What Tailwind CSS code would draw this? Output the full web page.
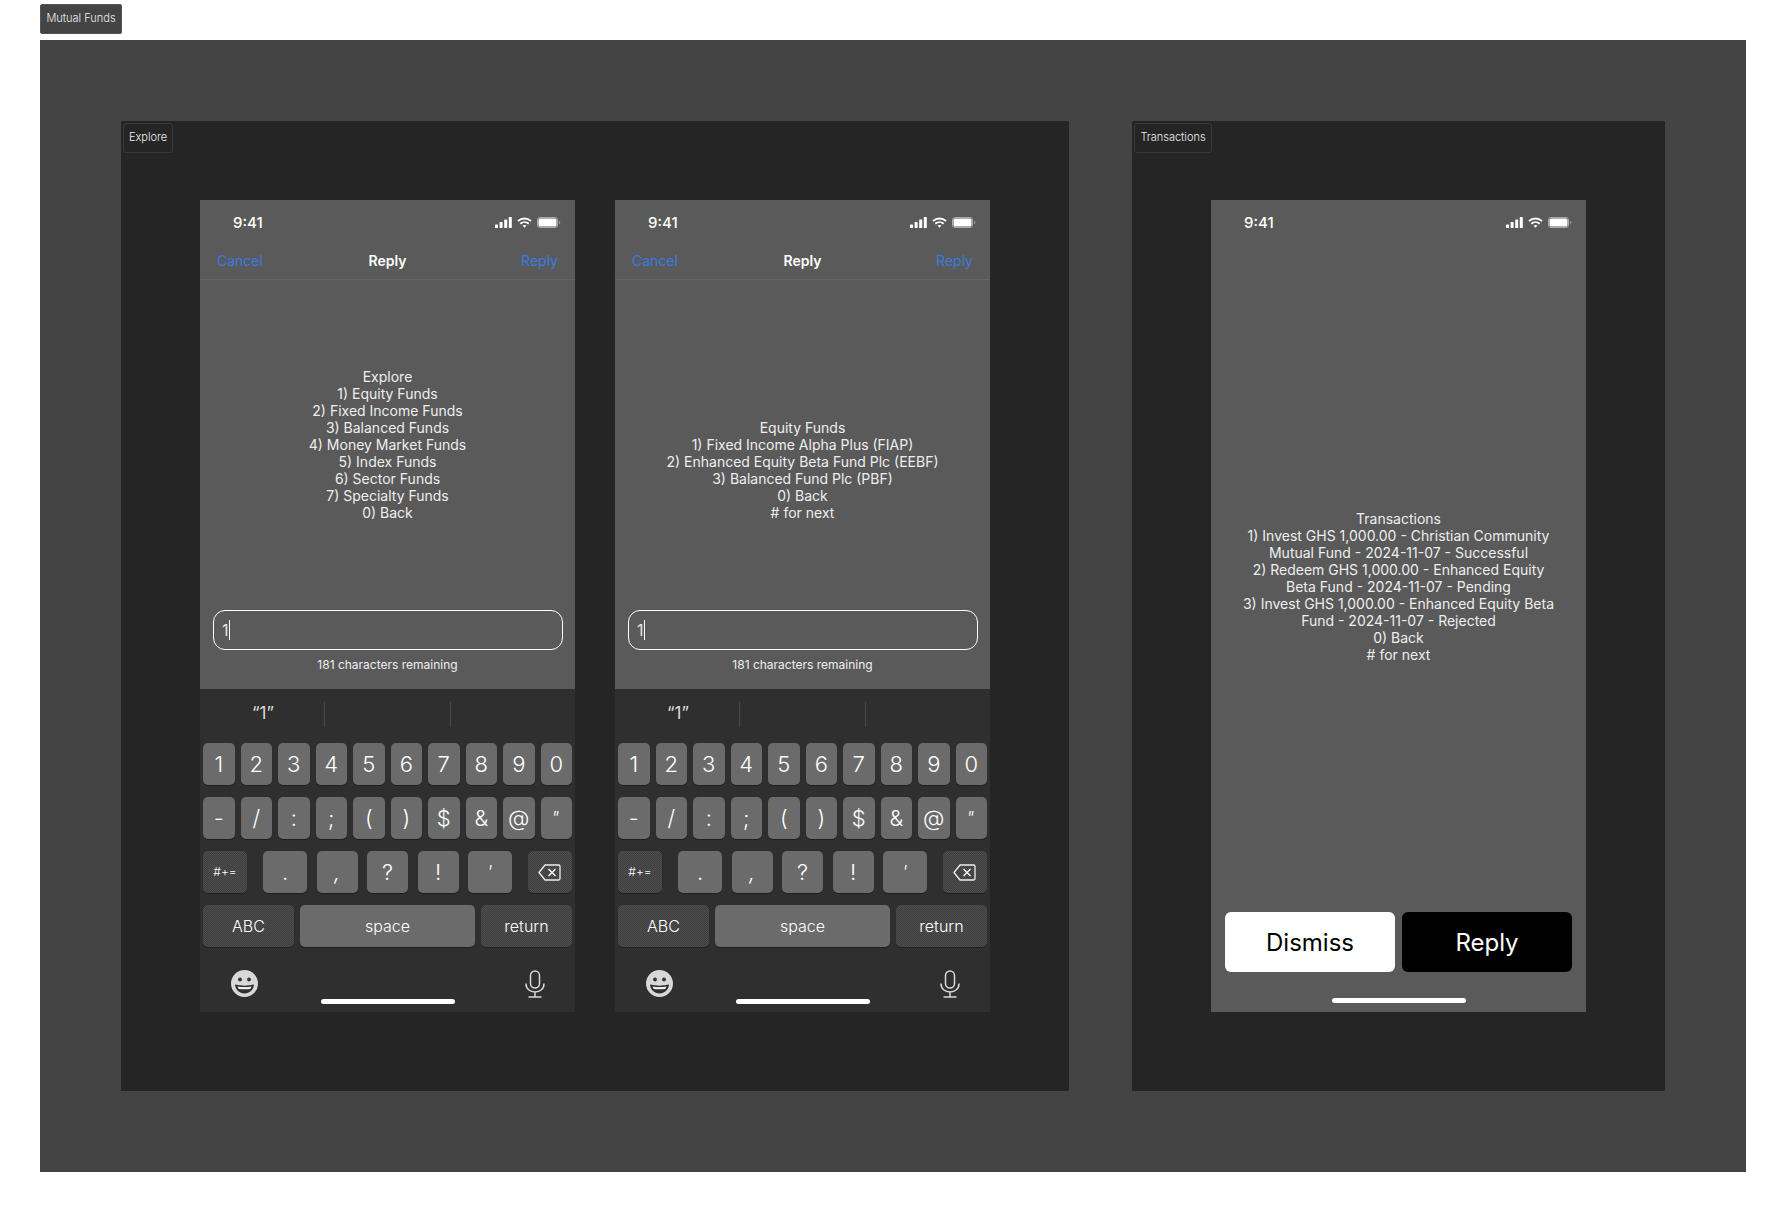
<!DOCTYPE html>
<html lang="en">
<head>
  <meta charset="UTF-8">
  <title>Mutual Funds</title>
  <script src="https://cdn.jsdelivr.net/npm/@tailwindcss/browser@4"></script>
</head>
<body class="bg-white font-['Inter',sans-serif] text-white">
  <div class="w-[1786px] h-[1212px] overflow-hidden pl-[40px] pt-[4px]">
    <!-- Section tag -->
    <div class="w-[82px] h-[30px] pb-[1px] flex items-center justify-center bg-[#444] border border-[#555] rounded-[2px] text-[11px] font-light text-[#eee]">Mutual Funds</div>

    <!-- Section canvas -->
    <div class="mt-[6px] w-[1706px] h-[1132px] bg-[#444] p-[81px] flex items-start gap-[63px]">

      <!-- Explore frame -->
      <div class="relative w-[948px] h-[970px] bg-[#252525] p-[79px] flex gap-[40px]">
        <div class="absolute left-[2px] top-[2px] w-[50px] h-[30px] pb-[1px] flex items-center justify-center border border-[#3a3a3a] rounded-[3px] text-[11px] font-light text-[#eee]">Explore</div>

        <!-- Phone 1 -->
        <div class="w-[375px] h-[812px] bg-[#5a5a5a] flex flex-col">
          <div class="h-[44px] flex items-center justify-between pl-[33px] pr-[14px]">
            <span class="text-[15px] font-medium leading-none">9:41</span>
            <div class="flex items-center gap-[5px]">
              <svg width="17" height="11" viewBox="0 0 17 11" fill="#fff"><rect x="0" y="7.500" width="3" height="3.500" rx=".6"/><rect x="4.600" y="5" width="3" height="6" rx=".6"/><rect x="9.200" y="2.500" width="3" height="8.500" rx=".6"/><rect x="13.800" y="0" width="3" height="11" rx=".6"/></svg>
              <svg width="15" height="11" viewBox="0 0 16 11" fill="none" stroke="#fff" stroke-width="2"><path d="M1 4c4-3.700 10-3.700 14 0"/><path d="M3.500 6.800c2.600-2.300 6.400-2.300 9 0"/><path d="M8 11 5.900 8.800c1.200-1 3-1 4.200 0z" fill="#fff" stroke="none"/></svg>
              <svg width="24" height="11" viewBox="0 0 24 11"><rect x=".5" y=".5" width="20" height="10" rx="2.500" fill="none" stroke="#aaa"/><rect x="1.500" y="1.500" width="18" height="8" rx="1.500" fill="#fff"/><path d="M22 3.700c.8.300 1.300 1 1.300 1.800s-.5 1.500-1.300 1.800z" fill="#999"/></svg>
            </div>
          </div>
          <div class="h-[36px] pb-[2px] grid grid-cols-3 items-center px-[17px] border-b border-[#666] text-[14px]">
            <span class="text-[#3a7be0]">Cancel</span>
            <span class="font-semibold text-center">Reply</span>
            <span class="text-[#3a7be0] text-right">Reply</span>
          </div>
          <div class="flex-1 flex flex-col justify-end">
            <div class="text-center text-[14px] leading-[17px] text-[#eee] pb-[89px]">
              <p>Explore</p>
              <p>1) Equity Funds</p>
              <p>2) Fixed Income Funds</p>
              <p>3) Balanced Funds</p>
              <p>4) Money Market Funds</p>
              <p>5) Index Funds</p>
              <p>6) Sector Funds</p>
              <p>7) Specialty Funds</p>
              <p>0) Back</p>
            </div>
            <div class="ml-[13px] mr-[12px] h-[40px] border border-white rounded-[12px] flex items-center pl-[8px] text-[16px] text-[#e5e5e5]">1<span class="w-px h-[20px] bg-white"></span></div>
            <p class="mt-[7px] mb-[17px] text-center text-[12px] leading-[15px] text-[#eee]">181 characters remaining</p>
          </div>
          <div class="h-[323px] bg-[#2f2f2f] shrink-0">
            <div class="h-[54px] pt-[13px] flex">
              <div class="w-[125px] h-[25px] pb-[2px] pl-[2px] flex items-center justify-center border-r border-[#484848] text-[17px] text-[#ddd]">“1”</div>
              <div class="w-[126px] h-[25px] border-r border-[#484848]"></div>
            </div>
            <div class="px-[3px] flex flex-col gap-[12px]">
              <div class="grid grid-cols-10 gap-x-[6px] text-[22px] font-light">
                <div class="h-[42px] bg-[#6b6b6b] rounded-[5px] shadow-[0_1px_0_#1f1f1f] flex items-center justify-center">1</div>
                <div class="h-[42px] bg-[#6b6b6b] rounded-[5px] shadow-[0_1px_0_#1f1f1f] flex items-center justify-center">2</div>
                <div class="h-[42px] bg-[#6b6b6b] rounded-[5px] shadow-[0_1px_0_#1f1f1f] flex items-center justify-center">3</div>
                <div class="h-[42px] bg-[#6b6b6b] rounded-[5px] shadow-[0_1px_0_#1f1f1f] flex items-center justify-center">4</div>
                <div class="h-[42px] bg-[#6b6b6b] rounded-[5px] shadow-[0_1px_0_#1f1f1f] flex items-center justify-center">5</div>
                <div class="h-[42px] bg-[#6b6b6b] rounded-[5px] shadow-[0_1px_0_#1f1f1f] flex items-center justify-center">6</div>
                <div class="h-[42px] bg-[#6b6b6b] rounded-[5px] shadow-[0_1px_0_#1f1f1f] flex items-center justify-center">7</div>
                <div class="h-[42px] bg-[#6b6b6b] rounded-[5px] shadow-[0_1px_0_#1f1f1f] flex items-center justify-center">8</div>
                <div class="h-[42px] bg-[#6b6b6b] rounded-[5px] shadow-[0_1px_0_#1f1f1f] flex items-center justify-center">9</div>
                <div class="h-[42px] bg-[#6b6b6b] rounded-[5px] shadow-[0_1px_0_#1f1f1f] flex items-center justify-center">0</div>
              </div>
              <div class="grid grid-cols-10 gap-x-[6px] text-[22px] font-light">
                <div class="h-[42px] bg-[#6b6b6b] rounded-[5px] shadow-[0_1px_0_#1f1f1f] flex items-center justify-center">-</div>
                <div class="h-[42px] bg-[#6b6b6b] rounded-[5px] shadow-[0_1px_0_#1f1f1f] flex items-center justify-center">/</div>
                <div class="h-[42px] bg-[#6b6b6b] rounded-[5px] shadow-[0_1px_0_#1f1f1f] flex items-center justify-center">:</div>
                <div class="h-[42px] bg-[#6b6b6b] rounded-[5px] shadow-[0_1px_0_#1f1f1f] flex items-center justify-center">;</div>
                <div class="h-[42px] bg-[#6b6b6b] rounded-[5px] shadow-[0_1px_0_#1f1f1f] flex items-center justify-center">(</div>
                <div class="h-[42px] bg-[#6b6b6b] rounded-[5px] shadow-[0_1px_0_#1f1f1f] flex items-center justify-center">)</div>
                <div class="h-[42px] bg-[#6b6b6b] rounded-[5px] shadow-[0_1px_0_#1f1f1f] flex items-center justify-center">$</div>
                <div class="h-[42px] bg-[#6b6b6b] rounded-[5px] shadow-[0_1px_0_#1f1f1f] flex items-center justify-center">&amp;</div>
                <div class="h-[42px] bg-[#6b6b6b] rounded-[5px] shadow-[0_1px_0_#1f1f1f] flex items-center justify-center">@</div>
                <div class="h-[42px] pr-[2px] bg-[#6b6b6b] rounded-[5px] shadow-[0_1px_0_#1f1f1f] flex items-center justify-center italic text-[18px]">"</div>
              </div>
              <div class="flex justify-between">
                <div class="w-[44px] h-[42px] bg-[repeating-conic-gradient(#3d3d3d_0_25%,#4f4f4f_0_50%)] bg-[length:2px_2px] rounded-[5px] shadow-[0_1px_0_#1f1f1f] flex items-center justify-center text-[12px] font-light">#+=</div>
                <div class="w-[249px] flex justify-between text-[22px] font-light">
                  <div class="w-[44px] h-[42px] bg-[#6b6b6b] rounded-[5px] shadow-[0_1px_0_#1f1f1f] flex items-center justify-center">.</div>
                  <div class="w-[41px] h-[42px] bg-[#6b6b6b] rounded-[5px] shadow-[0_1px_0_#1f1f1f] flex items-center justify-center italic">,</div>
                  <div class="w-[41px] h-[42px] bg-[#6b6b6b] rounded-[5px] shadow-[0_1px_0_#1f1f1f] flex items-center justify-center">?</div>
                  <div class="w-[41px] h-[42px] bg-[#6b6b6b] rounded-[5px] shadow-[0_1px_0_#1f1f1f] flex items-center justify-center">!</div>
                  <div class="w-[44px] h-[42px] pr-[1px] bg-[#6b6b6b] rounded-[5px] shadow-[0_1px_0_#1f1f1f] flex items-center justify-center italic text-[18px]">'</div>
                </div>
                <div class="w-[44px] h-[42px] pr-[2px] bg-[repeating-conic-gradient(#3d3d3d_0_25%,#4f4f4f_0_50%)] bg-[length:2px_2px] rounded-[5px] shadow-[0_1px_0_#1f1f1f] flex items-center justify-center">
                  <svg width="23" height="17" viewBox="0 0 23 17" fill="none" stroke="#f0f0f0" stroke-width="1.300"><path d="M7 1h13.500A1.500 1.500 0 0 1 22 2.500v12a1.500 1.500 0 0 1-1.500 1.500H7L1 8.500z" stroke-linejoin="round"/><path d="m10.500 5 7 7M17.500 5l-7 7" stroke-width="1.500"/></svg>
                </div>
              </div>
              <div class="flex gap-[6px] text-[16px] font-light">
                <div class="w-[91px] h-[42px] bg-[repeating-conic-gradient(#3d3d3d_0_25%,#4f4f4f_0_50%)] bg-[length:2px_2px] rounded-[5px] shadow-[0_1px_0_#1f1f1f] flex items-center justify-center">ABC</div>
                <div class="flex-1 h-[42px] bg-[#6b6b6b] rounded-[5px] shadow-[0_1px_0_#1f1f1f] flex items-center justify-center">space</div>
                <div class="w-[91px] h-[42px] bg-[repeating-conic-gradient(#3d3d3d_0_25%,#4f4f4f_0_50%)] bg-[length:2px_2px] rounded-[5px] shadow-[0_1px_0_#1f1f1f] flex items-center justify-center">return</div>
              </div>
            </div>
            <div class="mt-[23px] px-[3px] grid grid-cols-[1fr_134px_1fr]">
              <div class="pl-[28px]">
                <svg width="27" height="27" viewBox="0 0 27 27"><circle cx="13.500" cy="13.500" r="13.500" fill="#d8d8d8"/><circle cx="9" cy="9.500" r="1.900" fill="#333"/><circle cx="18" cy="9.500" r="1.900" fill="#333"/><path d="M4 14.500c6 1.500 13 1.500 19 0-.5 5.500-4.500 9-9.500 9S4.500 20 4 14.500z" fill="#2f2f2f"/><path d="M6.500 16.500c4.500.8 9.500.8 14 0-.3 1-.7 1.800-1.200 2.400-3.600.5-8 .5-11.600 0-.5-.6-.9-1.400-1.200-2.400z" fill="#eee"/></svg>
              </div>
              <div class="pt-[29px]"><div class="h-[5px] bg-white rounded-full"></div></div>
              <div class="flex justify-end pr-[27px]">
                <svg width="20" height="28" viewBox="0 0 20 28" fill="none" stroke="#d8d8d8" stroke-width="1.500"><rect x="5.500" y="1" width="9" height="17" rx="4.500"/><path d="M1 13.500c0 5.500 4 8.500 9 8.500s9-3 9-8.500M10 22v5M3.500 27h13"/></svg>
              </div>
            </div>
          </div>
        </div>

        <!-- Phone 2 -->
        <div class="w-[375px] h-[812px] bg-[#5a5a5a] flex flex-col">
          <div class="h-[44px] flex items-center justify-between pl-[33px] pr-[14px]">
            <span class="text-[15px] font-medium leading-none">9:41</span>
            <div class="flex items-center gap-[5px]">
              <svg width="17" height="11" viewBox="0 0 17 11" fill="#fff"><rect x="0" y="7.500" width="3" height="3.500" rx=".6"/><rect x="4.600" y="5" width="3" height="6" rx=".6"/><rect x="9.200" y="2.500" width="3" height="8.500" rx=".6"/><rect x="13.800" y="0" width="3" height="11" rx=".6"/></svg>
              <svg width="15" height="11" viewBox="0 0 16 11" fill="none" stroke="#fff" stroke-width="2"><path d="M1 4c4-3.700 10-3.700 14 0"/><path d="M3.500 6.800c2.600-2.300 6.400-2.300 9 0"/><path d="M8 11 5.900 8.800c1.200-1 3-1 4.200 0z" fill="#fff" stroke="none"/></svg>
              <svg width="24" height="11" viewBox="0 0 24 11"><rect x=".5" y=".5" width="20" height="10" rx="2.500" fill="none" stroke="#aaa"/><rect x="1.500" y="1.500" width="18" height="8" rx="1.500" fill="#fff"/><path d="M22 3.700c.8.300 1.300 1 1.300 1.800s-.5 1.500-1.300 1.800z" fill="#999"/></svg>
            </div>
          </div>
          <div class="h-[36px] pb-[2px] grid grid-cols-3 items-center px-[17px] border-b border-[#666] text-[14px]">
            <span class="text-[#3a7be0]">Cancel</span>
            <span class="font-semibold text-center">Reply</span>
            <span class="text-[#3a7be0] text-right">Reply</span>
          </div>
          <div class="flex-1 flex flex-col justify-end">
            <div class="text-center text-[14px] leading-[17px] text-[#eee] pb-[89px]">
              <p>Equity Funds</p>
              <p>1) Fixed Income Alpha Plus (FIAP)</p>
              <p>2) Enhanced Equity Beta Fund Plc (EEBF)</p>
              <p>3) Balanced Fund Plc (PBF)</p>
              <p>0) Back</p>
              <p># for next</p>
            </div>
            <div class="ml-[13px] mr-[12px] h-[40px] border border-white rounded-[12px] flex items-center pl-[8px] text-[16px] text-[#e5e5e5]">1<span class="w-px h-[20px] bg-white"></span></div>
            <p class="mt-[7px] mb-[17px] text-center text-[12px] leading-[15px] text-[#eee]">181 characters remaining</p>
          </div>
          <div class="h-[323px] bg-[#2f2f2f] shrink-0">
            <div class="h-[54px] pt-[13px] flex">
              <div class="w-[125px] h-[25px] pb-[2px] pl-[2px] flex items-center justify-center border-r border-[#484848] text-[17px] text-[#ddd]">“1”</div>
              <div class="w-[126px] h-[25px] border-r border-[#484848]"></div>
            </div>
            <div class="px-[3px] flex flex-col gap-[12px]">
              <div class="grid grid-cols-10 gap-x-[6px] text-[22px] font-light">
                <div class="h-[42px] bg-[#6b6b6b] rounded-[5px] shadow-[0_1px_0_#1f1f1f] flex items-center justify-center">1</div>
                <div class="h-[42px] bg-[#6b6b6b] rounded-[5px] shadow-[0_1px_0_#1f1f1f] flex items-center justify-center">2</div>
                <div class="h-[42px] bg-[#6b6b6b] rounded-[5px] shadow-[0_1px_0_#1f1f1f] flex items-center justify-center">3</div>
                <div class="h-[42px] bg-[#6b6b6b] rounded-[5px] shadow-[0_1px_0_#1f1f1f] flex items-center justify-center">4</div>
                <div class="h-[42px] bg-[#6b6b6b] rounded-[5px] shadow-[0_1px_0_#1f1f1f] flex items-center justify-center">5</div>
                <div class="h-[42px] bg-[#6b6b6b] rounded-[5px] shadow-[0_1px_0_#1f1f1f] flex items-center justify-center">6</div>
                <div class="h-[42px] bg-[#6b6b6b] rounded-[5px] shadow-[0_1px_0_#1f1f1f] flex items-center justify-center">7</div>
                <div class="h-[42px] bg-[#6b6b6b] rounded-[5px] shadow-[0_1px_0_#1f1f1f] flex items-center justify-center">8</div>
                <div class="h-[42px] bg-[#6b6b6b] rounded-[5px] shadow-[0_1px_0_#1f1f1f] flex items-center justify-center">9</div>
                <div class="h-[42px] bg-[#6b6b6b] rounded-[5px] shadow-[0_1px_0_#1f1f1f] flex items-center justify-center">0</div>
              </div>
              <div class="grid grid-cols-10 gap-x-[6px] text-[22px] font-light">
                <div class="h-[42px] bg-[#6b6b6b] rounded-[5px] shadow-[0_1px_0_#1f1f1f] flex items-center justify-center">-</div>
                <div class="h-[42px] bg-[#6b6b6b] rounded-[5px] shadow-[0_1px_0_#1f1f1f] flex items-center justify-center">/</div>
                <div class="h-[42px] bg-[#6b6b6b] rounded-[5px] shadow-[0_1px_0_#1f1f1f] flex items-center justify-center">:</div>
                <div class="h-[42px] bg-[#6b6b6b] rounded-[5px] shadow-[0_1px_0_#1f1f1f] flex items-center justify-center">;</div>
                <div class="h-[42px] bg-[#6b6b6b] rounded-[5px] shadow-[0_1px_0_#1f1f1f] flex items-center justify-center">(</div>
                <div class="h-[42px] bg-[#6b6b6b] rounded-[5px] shadow-[0_1px_0_#1f1f1f] flex items-center justify-center">)</div>
                <div class="h-[42px] bg-[#6b6b6b] rounded-[5px] shadow-[0_1px_0_#1f1f1f] flex items-center justify-center">$</div>
                <div class="h-[42px] bg-[#6b6b6b] rounded-[5px] shadow-[0_1px_0_#1f1f1f] flex items-center justify-center">&amp;</div>
                <div class="h-[42px] bg-[#6b6b6b] rounded-[5px] shadow-[0_1px_0_#1f1f1f] flex items-center justify-center">@</div>
                <div class="h-[42px] pr-[2px] bg-[#6b6b6b] rounded-[5px] shadow-[0_1px_0_#1f1f1f] flex items-center justify-center italic text-[18px]">"</div>
              </div>
              <div class="flex justify-between">
                <div class="w-[44px] h-[42px] bg-[repeating-conic-gradient(#3d3d3d_0_25%,#4f4f4f_0_50%)] bg-[length:2px_2px] rounded-[5px] shadow-[0_1px_0_#1f1f1f] flex items-center justify-center text-[12px] font-light">#+=</div>
                <div class="w-[249px] flex justify-between text-[22px] font-light">
                  <div class="w-[44px] h-[42px] bg-[#6b6b6b] rounded-[5px] shadow-[0_1px_0_#1f1f1f] flex items-center justify-center">.</div>
                  <div class="w-[41px] h-[42px] bg-[#6b6b6b] rounded-[5px] shadow-[0_1px_0_#1f1f1f] flex items-center justify-center italic">,</div>
                  <div class="w-[41px] h-[42px] bg-[#6b6b6b] rounded-[5px] shadow-[0_1px_0_#1f1f1f] flex items-center justify-center">?</div>
                  <div class="w-[41px] h-[42px] bg-[#6b6b6b] rounded-[5px] shadow-[0_1px_0_#1f1f1f] flex items-center justify-center">!</div>
                  <div class="w-[44px] h-[42px] pr-[1px] bg-[#6b6b6b] rounded-[5px] shadow-[0_1px_0_#1f1f1f] flex items-center justify-center italic text-[18px]">'</div>
                </div>
                <div class="w-[44px] h-[42px] pr-[2px] bg-[repeating-conic-gradient(#3d3d3d_0_25%,#4f4f4f_0_50%)] bg-[length:2px_2px] rounded-[5px] shadow-[0_1px_0_#1f1f1f] flex items-center justify-center">
                  <svg width="23" height="17" viewBox="0 0 23 17" fill="none" stroke="#f0f0f0" stroke-width="1.300"><path d="M7 1h13.500A1.500 1.500 0 0 1 22 2.500v12a1.500 1.500 0 0 1-1.500 1.500H7L1 8.500z" stroke-linejoin="round"/><path d="m10.500 5 7 7M17.500 5l-7 7" stroke-width="1.500"/></svg>
                </div>
              </div>
              <div class="flex gap-[6px] text-[16px] font-light">
                <div class="w-[91px] h-[42px] bg-[repeating-conic-gradient(#3d3d3d_0_25%,#4f4f4f_0_50%)] bg-[length:2px_2px] rounded-[5px] shadow-[0_1px_0_#1f1f1f] flex items-center justify-center">ABC</div>
                <div class="flex-1 h-[42px] bg-[#6b6b6b] rounded-[5px] shadow-[0_1px_0_#1f1f1f] flex items-center justify-center">space</div>
                <div class="w-[91px] h-[42px] bg-[repeating-conic-gradient(#3d3d3d_0_25%,#4f4f4f_0_50%)] bg-[length:2px_2px] rounded-[5px] shadow-[0_1px_0_#1f1f1f] flex items-center justify-center">return</div>
              </div>
            </div>
            <div class="mt-[23px] px-[3px] grid grid-cols-[1fr_134px_1fr]">
              <div class="pl-[28px]">
                <svg width="27" height="27" viewBox="0 0 27 27"><circle cx="13.500" cy="13.500" r="13.500" fill="#d8d8d8"/><circle cx="9" cy="9.500" r="1.900" fill="#333"/><circle cx="18" cy="9.500" r="1.900" fill="#333"/><path d="M4 14.500c6 1.500 13 1.500 19 0-.5 5.500-4.500 9-9.500 9S4.500 20 4 14.500z" fill="#2f2f2f"/><path d="M6.500 16.500c4.500.8 9.500.8 14 0-.3 1-.7 1.800-1.200 2.400-3.600.5-8 .5-11.600 0-.5-.6-.9-1.400-1.200-2.400z" fill="#eee"/></svg>
              </div>
              <div class="pt-[29px]"><div class="h-[5px] bg-white rounded-full"></div></div>
              <div class="flex justify-end pr-[27px]">
                <svg width="20" height="28" viewBox="0 0 20 28" fill="none" stroke="#d8d8d8" stroke-width="1.500"><rect x="5.500" y="1" width="9" height="17" rx="4.500"/><path d="M1 13.500c0 5.500 4 8.500 9 8.500s9-3 9-8.500M10 22v5M3.500 27h13"/></svg>
              </div>
            </div>
          </div>
        </div>
      </div>

      <!-- Transactions frame -->
      <div class="relative w-[533px] h-[970px] bg-[#252525] p-[79px]">
        <div class="absolute left-[2px] top-[2px] w-[78px] h-[30px] pb-[1px] flex items-center justify-center border border-[#3a3a3a] rounded-[3px] text-[11px] font-light text-[#eee]">Transactions</div>

        <!-- Phone 3 -->
        <div class="w-[375px] h-[812px] bg-[#5a5a5a] flex flex-col">
          <div class="h-[44px] flex items-center justify-between pl-[33px] pr-[14px]">
            <span class="text-[15px] font-medium leading-none">9:41</span>
            <div class="flex items-center gap-[5px]">
              <svg width="17" height="11" viewBox="0 0 17 11" fill="#fff"><rect x="0" y="7.500" width="3" height="3.500" rx=".6"/><rect x="4.600" y="5" width="3" height="6" rx=".6"/><rect x="9.200" y="2.500" width="3" height="8.500" rx=".6"/><rect x="13.800" y="0" width="3" height="11" rx=".6"/></svg>
              <svg width="15" height="11" viewBox="0 0 16 11" fill="none" stroke="#fff" stroke-width="2"><path d="M1 4c4-3.700 10-3.700 14 0"/><path d="M3.500 6.800c2.600-2.300 6.400-2.300 9 0"/><path d="M8 11 5.900 8.800c1.200-1 3-1 4.200 0z" fill="#fff" stroke="none"/></svg>
              <svg width="24" height="11" viewBox="0 0 24 11"><rect x=".5" y=".5" width="20" height="10" rx="2.500" fill="none" stroke="#aaa"/><rect x="1.500" y="1.500" width="18" height="8" rx="1.500" fill="#fff"/><path d="M22 3.700c.8.300 1.300 1 1.300 1.800s-.5 1.500-1.300 1.800z" fill="#999"/></svg>
            </div>
          </div>
          <div class="mt-[266px] px-[27px] text-center text-[14px] leading-[17px] text-[#eee]">
            <p>Transactions</p>
            <p>1) Invest GHS 1,000.00 - Christian Community Mutual Fund - 2024-11-07 - Successful</p>
            <p>2) Redeem GHS 1,000.00 - Enhanced Equity Beta Fund - 2024-11-07 - Pending</p>
            <p>3) Invest GHS 1,000.00 - Enhanced Equity Beta Fund - 2024-11-07 - Rejected</p>
            <p>0) Back</p>
            <p># for next</p>
          </div>
          <div class="mt-auto px-[14px] flex gap-[7px] text-[24px]">
            <div class="flex-1 h-[60px] pt-[1px] bg-white text-black rounded-[6px] flex items-center justify-center">Dismiss</div>
            <div class="flex-1 h-[60px] pt-[1px] bg-black text-white rounded-[6px] flex items-center justify-center">Reply</div>
          </div>
          <div class="mt-[26px] mb-[9px] mx-auto w-[134px] h-[5px] bg-white rounded-full"></div>
        </div>
      </div>
    </div>
  </div>
</body>
</html>
